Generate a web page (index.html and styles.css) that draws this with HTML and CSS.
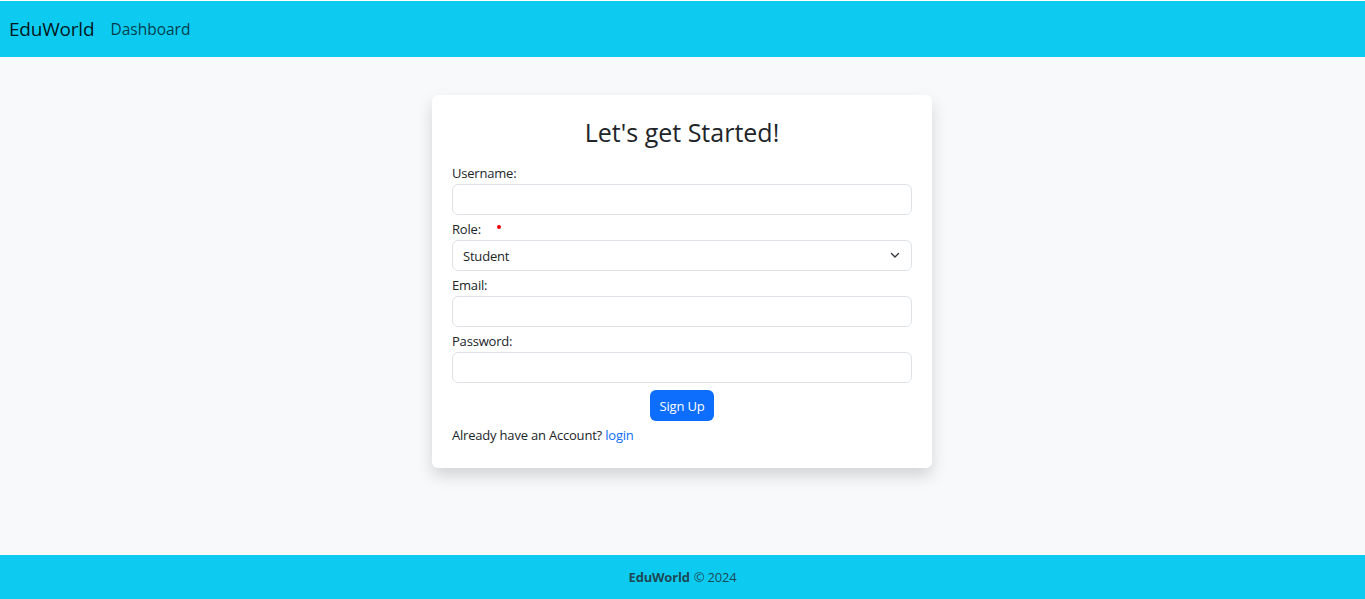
FILE: index.html
```html
<!DOCTYPE html>
<html lang="en">
<head>
<meta charset="utf-8">
<title>EduWorld - Sign Up</title>
<link rel="stylesheet" href="styles.css">
</head>
<body>
<div class="page">
  <nav class="navbar">
    <a class="brand" href="#">EduWorld</a>
    <a class="nav-link" href="#">Dashboard</a>
  </nav>
  <main class="main">
    <div class="card">
      <h3 class="title">Let's get Started!</h3>
      <form class="form">
        <div class="field">
          <label class="label">Username:</label>
          <input class="control" type="text">
        </div>
        <div class="field">
          <label class="label">Role: <span class="req"></span></label>
          <div class="select">
            <span>Student</span>
            <svg class="chev" width="10" height="7" viewBox="0 0 10 7"><path d="M1.5 1.5l3.5 3.5 3.5-3.5" fill="none" stroke="#343a40" stroke-width="1.4" stroke-linecap="round" stroke-linejoin="round"/></svg>
          </div>
        </div>
        <div class="field">
          <label class="label">Email:</label>
          <input class="control" type="email">
        </div>
        <div class="field">
          <label class="label">Password:</label>
          <input class="control" type="password">
        </div>
        <div class="actions">
          <button class="btn" type="button">Sign Up</button>
        </div>
        <p class="note">Already have an Account? <a href="#" class="link">login</a></p>
      </form>
    </div>
  </main>
  <footer class="footer"><b>EduWorld</b> © 2024</footer>
</div>
</body>
</html>
```
FILE: styles.css
```css
* { box-sizing: border-box; }
html, body { margin: 0; height: 100%; }
body {
  font-family: "Open Sans", "Noto Sans", sans-serif;
  color: #212529;
  background: #fff;
  font-size: 14px;
}
.page {
  display: flex;
  flex-direction: column;
  height: 599px;
  padding-top: 1px;
}
.navbar {
  background: #0dcaf0;
  height: 56px;
  display: flex;
  align-items: center;
  padding: 0 9px;
  gap: 16px;
  flex: none;
}
.brand {
  font-size: 19px;
  letter-spacing: -0.2px;
  color: rgba(0,0,0,.9);
  text-decoration: none;
}
.nav-link {
  font-size: 15.5px;
  color: rgba(0,0,0,.72);
  text-decoration: none;
}
.main {
  flex: 1;
  background: #f8f9fa;
  display: flex;
  justify-content: center;
  align-items: flex-start;
  padding-top: 38px;
  padding-right: 1px;
}
.card {
  width: 500px;
  background: #fff;
  border-radius: 6px;
  box-shadow: 0 8px 16px rgba(0,0,0,.15);
  padding: 20px 20px 22px;
}
.title {
  margin: 0 0 14px;
  text-align: center;
  font-size: 25px;
  font-weight: 500;
  line-height: 34px;
}
.form { display: flex; flex-direction: column; letter-spacing: -0.2px; }
.field { margin-bottom: 4px; display: flex; flex-direction: column; }
.label { font-size: 13px; line-height: 21px; display: flex; align-items: center; }
.req {
  display: inline-block;
  width: 4px; height: 4px;
  border-radius: 50%;
  background: #e00;
  margin-left: 16px;
  margin-top: -6px;
}
.control, .select {
  height: 31px;
  width: 100%;
  border: 1px solid #dee2e6;
  border-radius: 6px;
  background: #fff;
  font: inherit;
  padding: 4px 10px;
}
.select {
  display: flex;
  align-items: center;
  justify-content: space-between;
  font-size: 13px;
  padding-right: 11px;
}
.actions { display: flex; justify-content: center; margin-top: 3px; }
.btn {
  background: #0d6efd;
  color: #fff;
  border: none;
  border-radius: 6px;
  height: 31px;
  padding: 0 10px;
  font: inherit;
  font-size: 13px;
  letter-spacing: -0.2px;
}
.note { margin: 4px 0 0; line-height: 21px; font-size: 13px; }
.link { color: #0d6efd; text-decoration: none; }
.footer {
  flex: none;
  height: 44px;
  background: #0dcaf0;
  display: flex;
  align-items: center;
  justify-content: center;
  gap: 4px;
  font-size: 13px;
  letter-spacing: -0.2px;
  color: rgba(33,37,41,.8);
}
.footer b { font-weight: 700; }
```
